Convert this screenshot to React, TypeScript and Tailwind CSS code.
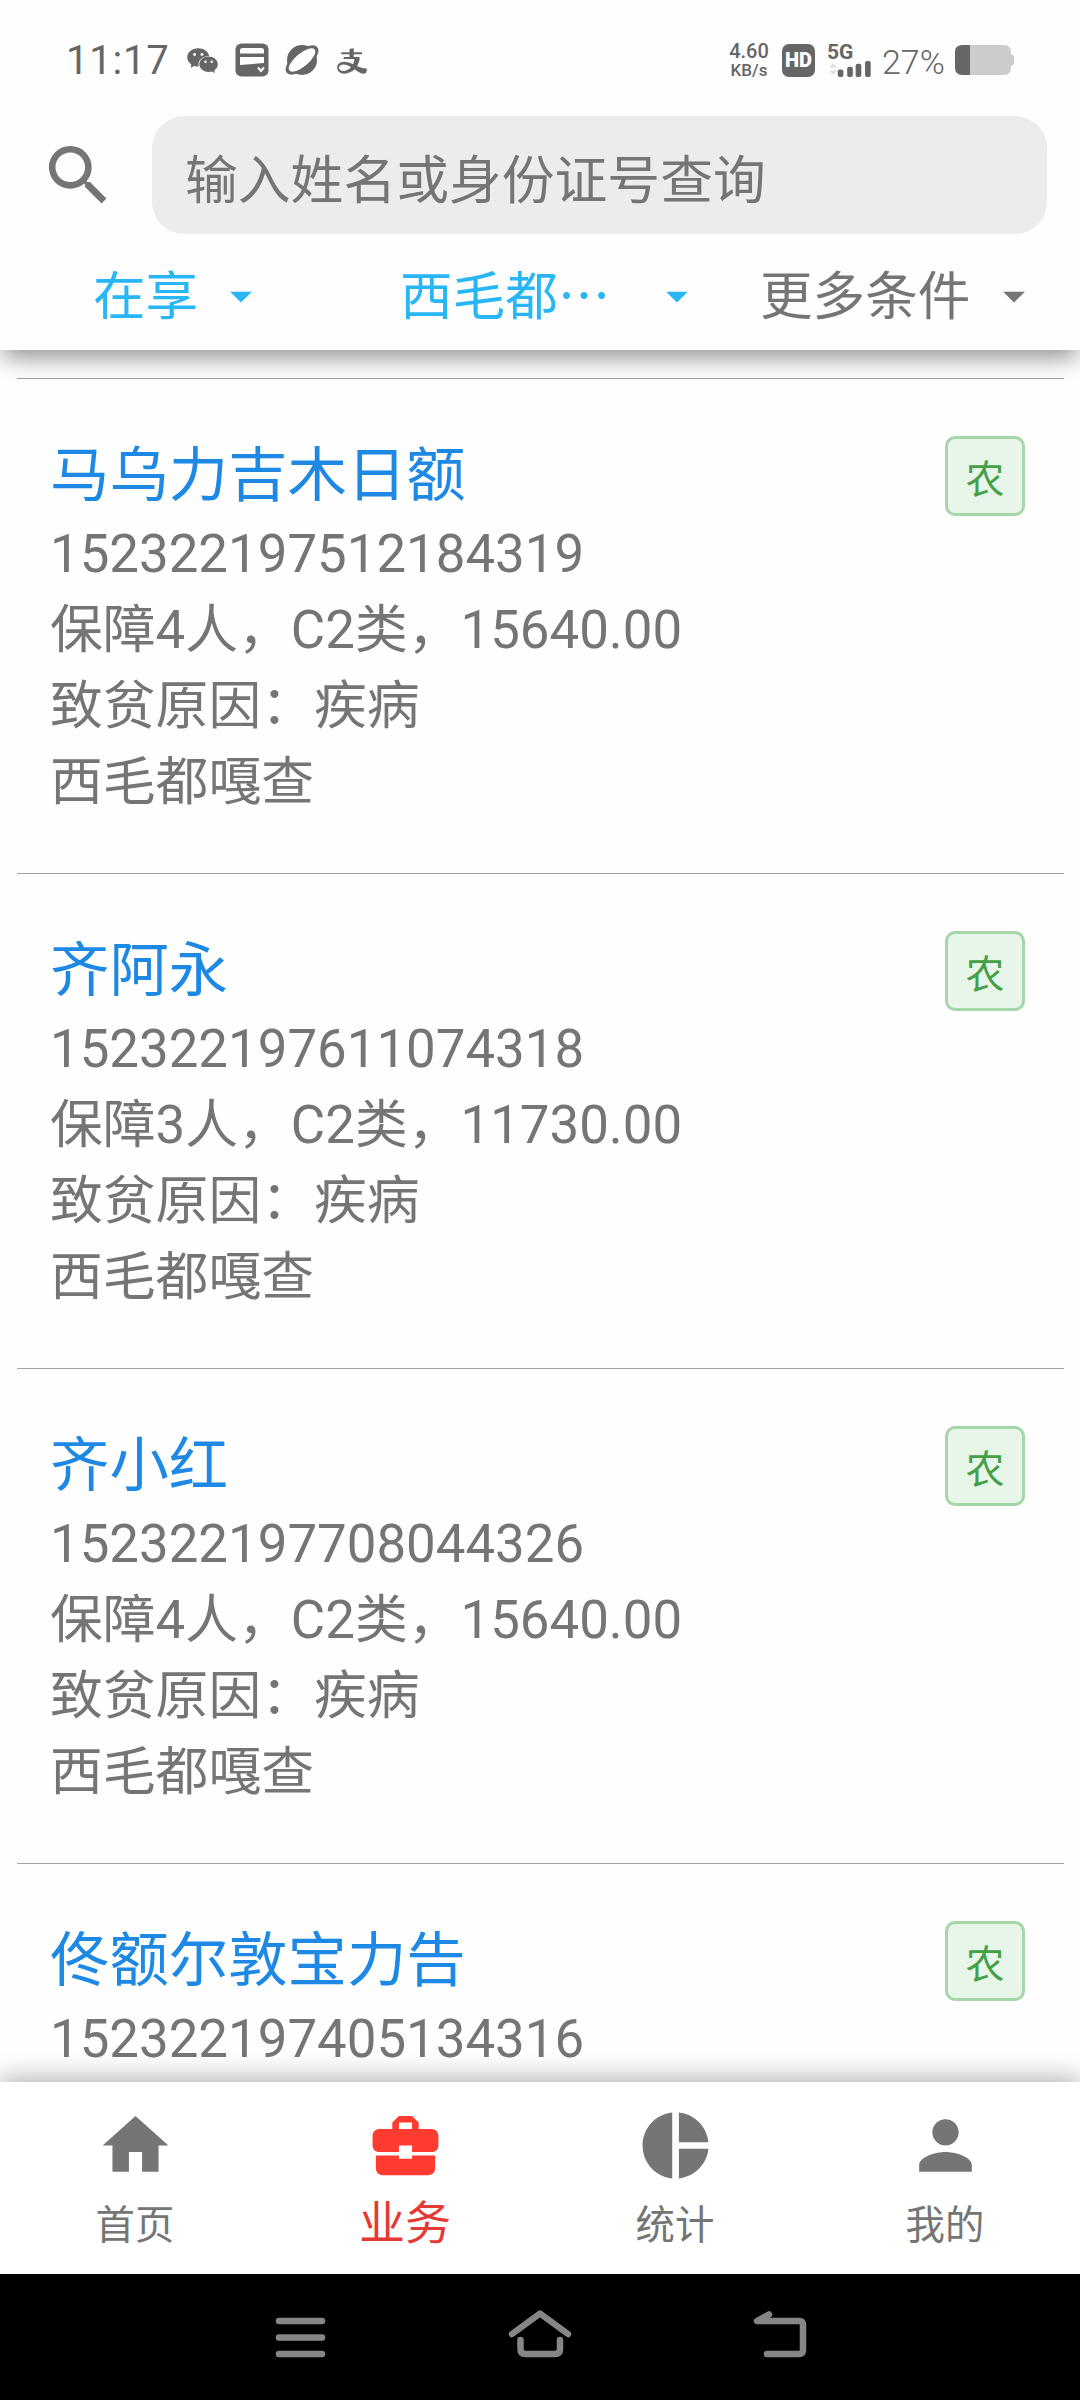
import type { ReactNode } from "react";
import {
  MdArrowDropDown,
  MdBusinessCenter,
  MdHome,
  MdPerson,
  MdPieChart,
  MdSearch,
} from "react-icons/md";
import { AiFillWechat, AiOutlineAlipay } from "react-icons/ai";

interface Household {
  name: string;
  idNumber: string;
  summary?: string;
  reason?: string;
  village?: string;
}

const households: Household[] = [
  {
    name: "马乌力吉木日额",
    idNumber: "152322197512184319",
    summary: "保障4人，C2类，15640.00",
    reason: "疾病",
    village: "西毛都嘎查",
  },
  {
    name: "齐阿永",
    idNumber: "152322197611074318",
    summary: "保障3人，C2类，11730.00",
    reason: "疾病",
    village: "西毛都嘎查",
  },
  {
    name: "齐小红",
    idNumber: "152322197708044326",
    summary: "保障4人，C2类，15640.00",
    reason: "疾病",
    village: "西毛都嘎查",
  },
  {
    name: "佟额尔敦宝力告",
    idNumber: "152322197405134316",
  },
];

function StatusBar() {
  return (
    <div className="flex h-[116px] items-start justify-between pt-10 pr-[66px] pl-[66px] font-[Roboto,sans-serif] text-[#666]">
      <div className="flex h-10 items-center">
        <span className="w-[119px] pt-[2px] text-[40px] leading-10 tracking-[0.8px]">11:17</span>
        <AiFillWechat className="h-[37px] w-[35px]" />
        <svg className="ml-[15px] h-[34px] w-[34px]" viewBox="0 0 34 34" fill="none">
          <rect x="0.5" y="0.5" width="33" height="33" rx="6" fill="currentColor" />
          <path d="M7.500 5H26.500Q29 5 29 7.500V10.500H5V7.500Q5 5 7.500 5ZM5 14H29V20L5 22Z" fill="white" />
          <path d="m23 24.500 3 3.500 3-3.500" stroke="white" strokeWidth="2" />
        </svg>
        <svg className="ml-4 h-[34px] w-[34px]" viewBox="0 0 34 34" fill="none">
          <circle cx="17" cy="17" r="15" fill="currentColor" />
          <ellipse cx="17" cy="17" rx="20" ry="9" transform="rotate(-40 17 17)" fill="currentColor" />
          <ellipse cx="17" cy="17" rx="16.500" ry="6.500" transform="rotate(-40 17 17)" fill="white" />
        </svg>
        <AiOutlineAlipay className="mt-px ml-4 h-[34px] w-[34px]" />
      </div>

      <div className="flex h-10 items-center">
        <div className="flex w-10 flex-col items-center pt-[2px] leading-[19px] font-medium">
          <span className="text-[20px]">4.60</span>
          <span className="text-[17px]">KB/s</span>
        </div>
        <span className="ml-[13px] flex h-[33px] w-[33px] items-center justify-center rounded-[7px] bg-[#666] text-[20px] font-black text-white">
          HD
        </span>
        <div className="ml-3 flex h-[34px] w-[46px] flex-col">
          <span className="text-[21px] leading-[18px] font-bold">5G</span>
          <svg className="h-[17px] w-[46px]" viewBox="0 0 46 17">
            <path d="M1 7 5 2 9 7ZM1 10 5 15 9 10Z" fill="#ddd" />
            <rect x="10" y="9" width="6" height="8" rx="2" fill="currentColor" />
            <rect x="20" y="6" width="6" height="11" rx="2" fill="currentColor" />
            <rect x="29" y="3" width="6" height="14" rx="2" fill="currentColor" />
            <rect x="39" y="0" width="6" height="17" rx="2" fill="currentColor" />
          </svg>
        </div>
        <span className="ml-[9px] w-[73px] pt-[3px] text-[34px] leading-10 font-light">27%</span>
        <svg className="h-[30px] w-[59px]" viewBox="0 0 59 30">
          <path d="M8 0H49Q56 0 56 7V9Q59 10 59 12V18Q59 20 56 21V23Q56 30 49 30H8Q0 30 0 23V7Q0 0 8 0Z" fill="#ccc" />
          <path d="M8 0H15V30H8Q0 30 0 23V7Q0 0 8 0Z" fill="currentColor" />
        </svg>
      </div>
    </div>
  );
}

function SearchHeader() {
  return (
    <header className="relative z-10 h-[350px] shrink-0 bg-[#fefefe] font-['Noto_Sans_CJK_SC',sans-serif] text-[52.600px] leading-[76px] shadow-[0_11px_22px_-3px_rgba(0,0,0,0.42)]">
      <StatusBar />
      <div className="flex h-[118px] pr-[33px] pl-[39px]">
        <MdSearch className="mt-[20px] h-[79px] w-[79px] text-[#757575]" />
        <div className="ml-[34px] flex flex-1 items-center rounded-[32px] bg-[#ececec] pt-[2px] pl-[33px] text-[52.800px] text-[#757575]">
          输入姓名或身份证号查询
        </div>
      </div>
      <div className="flex h-[116px] items-center text-[#29b6f6]">
        <div className="flex w-[400px] items-center pl-[93px]">
          <span>在享</span>
          <MdArrowDropDown className="mt-2 ml-[17px] h-[52px] w-[52px]" />
        </div>
        <div className="flex w-[360px] items-center">
          <span>西毛都…</span>
          <MdArrowDropDown className="mt-2 ml-[41px] h-[52px] w-[52px]" />
        </div>
        <div className="flex items-center text-[#757575]">
          <span>更多条件</span>
          <MdArrowDropDown className="mt-2 ml-[18px] h-[52px] w-[52px]" />
        </div>
      </div>
    </header>
  );
}

function HouseholdItem({ item }: { item: Household }) {
  return (
    <li className="mr-4 ml-[17px] flex h-[495px] shrink-0 items-start justify-between border-t border-[#a3a3a3] pt-14 pr-[39px] pl-[33px]">
      <div className="text-[52.800px] leading-[76px] text-[#757575]">
        <h2 className="-mb-px text-[59.400px] leading-[82px] text-[#1e88e5]">{item.name}</h2>
        <p>{item.idNumber}</p>
        {item.summary && <p>{item.summary}</p>}
        {item.reason && <p>致贫原因：{item.reason}</p>}
        {item.village && <p>{item.village}</p>}
      </div>
      <span className="mt-px flex h-20 w-20 items-center justify-center rounded-[10px] border-[3px] border-[#a5d6a7] bg-[#e8f5e9] font-['Noto_Sans_CJK_SC',sans-serif] text-[39px] leading-[60px] text-[#43a047]">
        农
      </span>
    </li>
  );
}

function Tab({ label, icon, active }: { label: string; icon: ReactNode; active?: boolean }) {
  return (
    <div
      className={`flex flex-1 flex-col items-center pt-6 ${
        active ? "text-[#ff3b30]" : "text-[#757575]"
      }`}
    >
      {icon}
      <span
        className={
          active
            ? "mt-2 text-[46px] leading-[60px] text-[#e53935]"
            : "mt-[11px] text-[39.400px] leading-[60px]"
        }
      >
        {label}
      </span>
    </div>
  );
}

function TabBar() {
  return (
    <nav className="relative z-10 flex h-[192px] shrink-0 bg-white shadow-[0_-4px_24px_rgba(0,0,0,0.3)]">
      <Tab label="首页" icon={<MdHome className="h-[79px] w-[79px]" />} />
      <Tab label="业务" icon={<MdBusinessCenter className="h-[79px] w-[79px]" />} active />
      <Tab label="统计" icon={<MdPieChart className="h-[79px] w-[79px]" />} />
      <Tab label="我的" icon={<MdPerson className="h-[79px] w-[79px]" />} />
    </nav>
  );
}

function SystemNav() {
  return (
    <div className="relative z-10 flex h-[126px] shrink-0 items-center justify-center gap-[176px] bg-black text-[#868686]">
      <svg className="h-16 w-16" viewBox="0 0 64 64" fill="none" stroke="currentColor" strokeWidth="6.500" strokeLinecap="round">
        <path d="M11 16H54M11 32.500H54M11 49H54" />
      </svg>
      <svg className="h-16 w-16" viewBox="0 0 64 64" fill="none" stroke="currentColor" strokeWidth="6.500" strokeLinecap="round" strokeLinejoin="round">
        <path d="M4 29 32 8.500 60 29M12.500 35V44Q12.500 49 17.500 49H47Q52 49 52 44V35" />
      </svg>
      <svg className="h-16 w-16" viewBox="0 0 64 64" fill="none" stroke="currentColor" strokeWidth="6.500" strokeLinecap="round" strokeLinejoin="round">
        <path d="M21 9.500 9 16H51Q55 16 55 20V45Q55 49 51 49H19" />
      </svg>
    </div>
  );
}

export default function App() {
  return (
    <div className="flex h-[2400px] w-[1080px] flex-col overflow-hidden bg-[#fefefe] font-[Roboto,'Noto_Sans_CJK_SC',sans-serif]">
      <SearchHeader />
      <ul className="flex flex-1 flex-col overflow-hidden pt-7">
        {households.map((item) => (
          <HouseholdItem key={item.idNumber} item={item} />
        ))}
      </ul>
      <TabBar />
      <SystemNav />
    </div>
  );
}
